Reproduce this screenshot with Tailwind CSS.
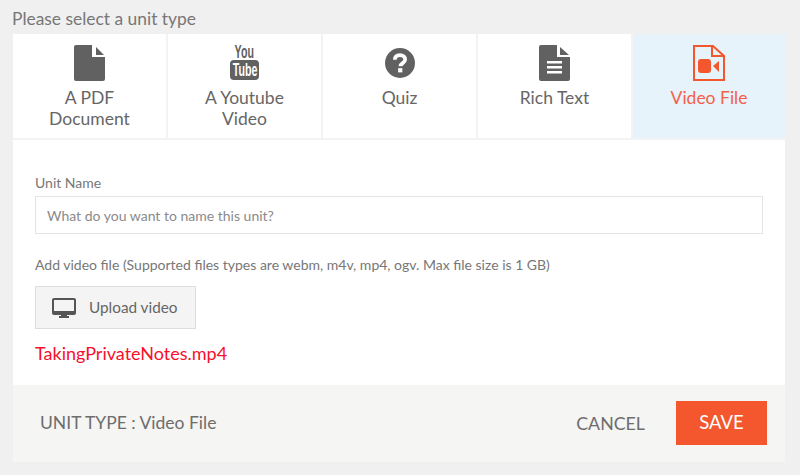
<!DOCTYPE html>
<html>
<head>
<meta charset="utf-8">
<script src="https://cdn.jsdelivr.net/npm/@tailwindcss/browser@4"></script>
</head>
<body class="m-0 w-[800px] h-[475px] overflow-hidden bg-[#f0f0f0] font-['Lato','Liberation_Sans',sans-serif] text-[#666]">
<div class="pl-[13px] pr-[15px] pt-[9px]">
  <p class="text-[17.4px] leading-[19px] h-[25px] -ml-px text-[#777]">Please select a unit type</p>
  <div class="flex h-[106px] bg-white border-b-2 border-[#f3f3f3] text-[17.5px] leading-[21px] text-center">
    <div class="w-[155px] border-r-2 border-[#f3f3f3] pt-[11px] flex flex-col items-center">
      <svg class="w-[32px] h-[36px]" viewBox="0 0 32 36"><path fill="#616161" d="M2 0H18V12H31V34a2 2 0 0 1-2 2H2a2 2 0 0 1-2-2V2a2 2 0 0 1 2-2Z"/><path fill="#616161" d="M22 2 30 10H22Z"/></svg>
      <div class="mt-[6px]">A PDF<br>Document</div>
    </div>
    <div class="w-[155px] border-r-2 border-[#f3f3f3] pt-[10px] flex flex-col items-center">
      <div class="w-[29px] h-[36px] flex flex-col items-center font-['Liberation_Sans',sans-serif] font-bold">
        <div class="h-[16px] w-full flex justify-center text-[#616161] text-[19px] leading-[15px]"><span class="inline-block scale-x-[.56]">You</span></div>
        <div class="h-[20px] w-full rounded-[4px] bg-[#616161] flex justify-center text-white text-[19px] leading-[20px]"><span class="inline-block scale-x-[.56]">Tube</span></div>
      </div>
      <div class="mt-[7px]">A Youtube<br>Video</div>
    </div>
    <div class="w-[155px] border-r-2 border-[#f3f3f3] pt-[14px] flex flex-col items-center">
      <svg class="w-[30px] h-[30px]" viewBox="0 0 32 32"><circle cx="16" cy="16" r="16" fill="#616161"/><path d="M10.500 12.500c0-3.500 2.500-5 5.500-5s5.500 1.800 5.500 4.800c0 4-5 3.700-5 7.200" fill="none" stroke="#fff" stroke-width="4"/><rect x="14" y="21.500" width="4.500" height="4.500" fill="#fff"/></svg>
      <div class="mt-[9px]">Quiz</div>
    </div>
    <div class="w-[155px] border-r-2 border-[#f3f3f3] pt-[11px] flex flex-col items-center">
      <svg class="w-[32px] h-[36px]" viewBox="0 0 32 36"><path fill="#616161" d="M2 0H18V12H31V34a2 2 0 0 1-2 2H2a2 2 0 0 1-2-2V2a2 2 0 0 1 2-2Z"/><path fill="#616161" d="M21 2 30 10H21Z"/><path fill="#fff" d="M8 16H23V18.500H8ZM8 21H23V23.500H8ZM8 26H23V28.500H8Z"/></svg>
      <div class="mt-[6px]">Rich Text</div>
    </div>
    <div class="flex-1 bg-[#e6f3fa] pt-[11px] flex flex-col items-center text-[#f4614a]">
      <svg class="w-[32px] h-[36px]" viewBox="0 0 32 36"><path fill="none" stroke="#f4572d" stroke-width="2" d="M1 1H20L31 11V35H1Z"/><path fill="none" stroke="#f4572d" stroke-width="2" d="M19 1V11H31"/><rect x="5" y="14" width="13" height="14" rx="3" fill="#f4572d"/><path d="M20 21 26 16V27Z" fill="#f4572d"/></svg>
      <div class="mt-[6px]">Video File</div>
    </div>
  </div>
  <div class="bg-white h-[245px] pl-[22px] pr-[22px] pt-[34px]">
    <label class="block text-[14px] leading-[17px] text-[#777]">Unit Name</label>
    <div class="mt-[5px] h-[38px] border border-[#e4e4e4] pl-[11px] flex items-center text-[14px] text-[#8a8a8a]">What do you want to name this unit?</div>
    <p class="mt-[22px] text-[14px] leading-[17px] text-[#777]">Add video file (Supported files types are webm, m4v, mp4, ogv. Max file size is 1 GB)</p>
    <div class="mt-[13px] w-[161px] h-[43px] bg-[#f4f4f4] border border-[#ddd] flex items-center pl-[16px] text-[15.3px] text-[#666]">
      <svg class="w-[24px] h-[20px] mr-[13px]" viewBox="0 0 24 20"><path fill="#555" d="M2 0H22a2 2 0 0 1 2 2V15a2 2 0 0 1-2 2H15V18H17V20H7V18H9V17H2a2 2 0 0 1-2-2V2a2 2 0 0 1 2-2ZM2 2V13H22V2Z"/></svg>
      Upload video
    </div>
    <p class="mt-[14px] text-[18px] leading-[20px] text-[#f80f2a]">TakingPrivateNotes.mp4</p>
  </div>
  <div class="h-[77px] bg-[#f5f5f3] flex items-center pl-[27px] pr-[18px] pb-px">
    <span class="text-[17.5px] text-[#6d6d6d]">UNIT TYPE : Video File</span>
    <span class="ml-auto text-[17.8px] text-[#6d6d6d] mr-[31px]">CANCEL</span>
    <div class="w-[91px] h-[44px] bg-[#f4572d] text-white text-[18.5px] flex items-center justify-center">SAVE</div>
  </div>
</div>
</body>
</html>
